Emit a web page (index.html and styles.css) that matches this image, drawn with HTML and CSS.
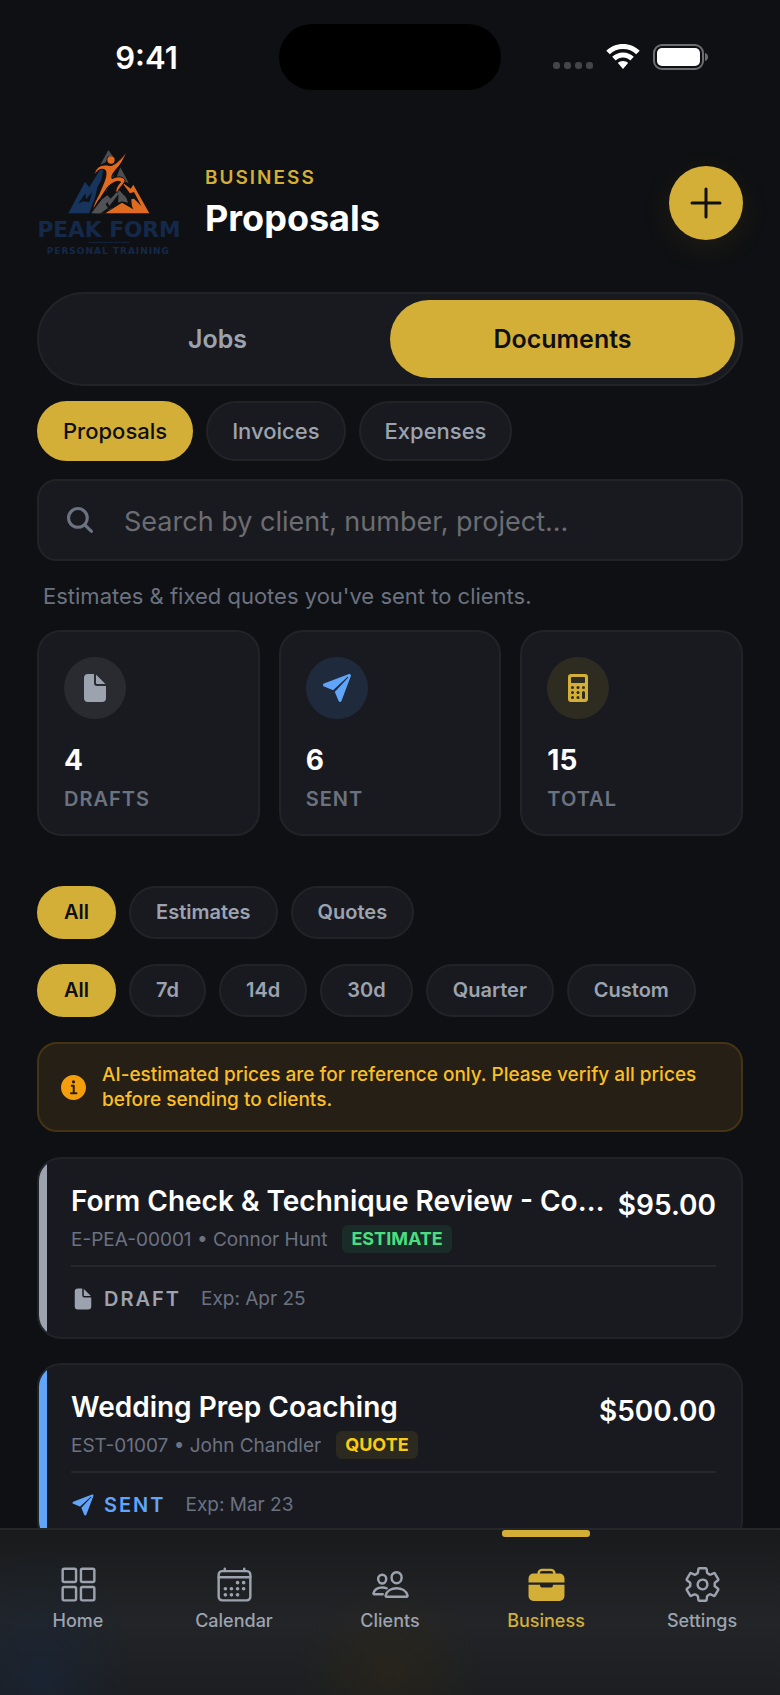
FILE: index.html
```html
<!DOCTYPE html>
<html lang="en">
<head>
  <meta charset="UTF-8">
  <meta name="viewport" content="width=device-width, initial-scale=1.0">
  <title>Proposals</title>
  <link rel="stylesheet" href="styles.css">
</head>
<body>
  <svg class="sprite" aria-hidden="true">
    <symbol id="icon-document" viewBox="0 0 512 512">
      <path d="M428 224H288a48 48 0 01-48-48V36a4 4 0 00-4-4h-92a64 64 0 00-64 64v320a64 64 0 0064 64h224a64 64 0 0064-64V228a4 4 0 00-4-4z"/>
      <path d="M419.22 188.59L275.41 44.78a2 2 0 00-3.41 1.41V176a16 16 0 0016 16h129.81a2 2 0 001.41-3.41z"/>
    </symbol>
    <symbol id="icon-plane" viewBox="0 0 512 512">
      <path d="M473 39.05a24 24 0 00-25.5-5.46L47.47 185h-.08a24 24 0 001 45.16l.41.13 137.3 58.63a16 16 0 0015.54-3.59L422 80a7.07 7.07 0 0110 10L226.66 310.26a16 16 0 00-3.59 15.54l58.65 137.38c.06.2.12.38.19.57 3.2 9.27 11.3 15.81 21.09 16.25h1a24.63 24.63 0 0023-15.46L478.39 64.62A24 24 0 00473 39.05z"/>
    </symbol>
  </svg>

  <div class="status-bar">
    <span class="time">9:41</span>
    <span class="island"></span>
    <span class="status-icons">
      <span class="dots"><i></i><i></i><i></i><i></i></span>
      <svg class="wifi" viewBox="0 0 34 26" aria-hidden="true">
        <path d="M17 0C23.5 0 29.400 2.500 33.700 6.700L30.200 10.300C26.700 6.900 22.100 5 17 5S7.300 6.900 3.800 10.300L.3 6.700C4.600 2.500 10.500 0 17 0z"/>
        <path d="M17 8.500C21.200 8.500 25 10.100 27.800 12.800L24.300 16.400C22.400 14.500 19.800 13.500 17 13.500S11.600 14.500 9.700 16.400L6.200 12.800C9 10.100 12.800 8.500 17 8.500z"/>
        <path d="M17 17C19 17 20.800 17.700 22.100 18.900L17 25L11.900 18.900C13.200 17.700 15 17 17 17z"/>
      </svg>
      <svg class="battery" viewBox="0 0 56 26" aria-hidden="true">
        <rect x="1" y="1" width="49" height="24" rx="8" fill="none" stroke="#6d6e70" stroke-width="2"/>
        <rect x="4" y="4" width="43" height="18" rx="5" fill="#fff"/>
        <path d="M52 9c4 1 4 7 0 8z" fill="#6d6e70"/>
      </svg>
    </span>
  </div>

  <main class="screen">
    <header class="header">
      <svg class="logo" viewBox="51 60 432 318" role="img" aria-label="Peak Form Personal Training">
        <path fill="#4b4d50" d="M265 60L278 78L262 80L258 96L241 104z"/>
        <path fill="#4b4d50" d="M301 112L326 158L314 156L306 142L290 140z"/>
        <path fill="#17345c" d="M145 250L195 155L208 172L238 122L250 118L244 150L232 172L226 200L208 250z"/>
        <path fill="#101114" d="M174 222L196 190L198 208L217 186L208 216L188 214z"/>
        <path fill="#17345c" d="M268 118L290 104L278 128L282 138L270 162L258 188L262 158z"/>
        <path fill="#505255" d="M214 250L246 208L262 196L272 206L296 180L318 198L324 218L304 214L254 250z"/>
        <path fill="#101114" d="M236 250L262 216L268 228L296 192L294 216L334 228L310 222L270 236L258 250z"/>
        <path fill="#505255" d="M224 250L254 218L264 234L242 250z"/>
        <path fill="#e06a1f" d="M310 160L332 176L340 164L388 250L256 250L306 218L340 238L322 198z"/>
        <path fill="#101114" d="M312 166L330 190L342 186L364 228L342 206L334 208L336 236L318 202L304 188z"/>
        <circle cx="273" cy="90" r="11" fill="#e06a1f"/>
        <path fill="#e06a1f" stroke="#101114" stroke-width="3" d="M322 64C312 86 302 106 287 120C278 130 274 138 276 146C296 136 313 141 315 152C314 162 300 168 292 188L287 184C289 170 296 163 302 156C292 150 278 158 264 170C250 190 244 202 234 214L218 242C220 220 231 206 237 192C248 164 262 142 257 122C246 112 232 120 222 136C226 112 242 103 262 105C280 114 302 88 322 64z"/>
        <text class="logo-name" x="267" y="321" text-anchor="middle">PEAK FORM</text>
        <path d="M205 337H330" stroke="#14263f" stroke-width="3"/>
        <text class="logo-tag" x="265" y="371" text-anchor="middle">PERSONAL TRAINING</text>
      </svg>
      <div class="heading">
        <span class="eyebrow">Business</span>
        <h1>Proposals</h1>
      </div>
      <button class="add-btn" type="button" aria-label="Add proposal">
        <svg viewBox="0 0 32 32" aria-hidden="true"><path d="M16 2v28M2 16h28"/></svg>
      </button>
    </header>

    <div class="tabs">
      <button class="tab" type="button">Jobs</button>
      <button class="tab active" type="button">Documents</button>
    </div>

    <div class="chips">
      <button class="chip active" type="button">Proposals</button>
      <button class="chip" type="button">Invoices</button>
      <button class="chip" type="button">Expenses</button>
    </div>

    <label class="search">
      <svg class="search-icon" viewBox="0 0 512 512" aria-hidden="true">
        <path d="M456.69 421.39L362.6 327.3a173.81 173.81 0 0034.84-104.58C397.44 126.38 319.06 48 222.72 48S48 126.38 48 222.72s78.38 174.72 174.72 174.72A173.81 173.81 0 00327.3 362.6l94.09 94.09a25 25 0 0035.3-35.3zM97.92 222.72a124.8 124.8 0 11124.8 124.8 124.95 124.95 0 01-124.8-124.8z"/>
      </svg>
      <input type="text" placeholder="Search by client, number, project..." aria-label="Search">
    </label>

    <p class="caption">Estimates &amp; fixed quotes you've sent to clients.</p>

    <section class="stats">
      <div class="stat">
        <span class="stat-icon gray"><svg><use href="#icon-document"/></svg></span>
        <strong>4</strong>
        <span class="stat-label">Drafts</span>
      </div>
      <div class="stat">
        <span class="stat-icon blue"><svg><use href="#icon-plane"/></svg></span>
        <strong>6</strong>
        <span class="stat-label">Sent</span>
      </div>
      <div class="stat">
        <span class="stat-icon gold">
          <svg viewBox="0 0 512 512">
            <path fill-rule="evenodd" d="M144 32h224a48 48 0 0148 48v352a48 48 0 01-48 48H144a48 48 0 01-48-48V80a48 48 0 0148-48zM156 80a12 12 0 00-12 12v72a12 12 0 0012 12h200a12 12 0 0012-12V92a12 12 0 00-12-12z"/>
            <g class="keys">
              <circle cx="168" cy="248" r="24"/><circle cx="256" cy="248" r="24"/><circle cx="344" cy="248" r="24"/>
              <circle cx="168" cy="328" r="24"/><circle cx="256" cy="328" r="24"/>
              <circle cx="168" cy="408" r="24"/><circle cx="256" cy="408" r="24"/>
              <rect x="320" y="304" width="48" height="128" rx="24"/>
            </g>
          </svg>
        </span>
        <strong>15</strong>
        <span class="stat-label">Total</span>
      </div>
    </section>

    <div class="filters">
      <button class="filter active" type="button">All</button>
      <button class="filter" type="button">Estimates</button>
      <button class="filter" type="button">Quotes</button>
    </div>
    <div class="filters">
      <button class="filter active" type="button">All</button>
      <button class="filter" type="button">7d</button>
      <button class="filter" type="button">14d</button>
      <button class="filter" type="button">30d</button>
      <button class="filter" type="button">Quarter</button>
      <button class="filter" type="button">Custom</button>
    </div>

    <div class="notice">
      <svg viewBox="56 56 400 400" aria-hidden="true">
        <path d="M256 56C145.72 56 56 145.72 56 256s89.72 200 200 200 200-89.72 200-200S366.28 56 256 56zm0 82a26 26 0 11-26 26 26 26 0 0126-26zm48 226h-88a16 16 0 010-32h28v-88h-16a16 16 0 010-32h32a16 16 0 0116 16v104h28a16 16 0 010 32z"/>
      </svg>
      <p>AI-estimated prices are for reference only. Please verify all prices before sending to clients.</p>
    </div>

    <article class="card draft">
      <div class="card-body">
        <div class="card-top">
          <div class="card-info">
            <h2>Form Check &amp; Technique Review - Co…</h2>
            <div class="meta">E-PEA-00001 • Connor Hunt <span class="badge green">Estimate</span></div>
          </div>
          <span class="price">$95.00</span>
        </div>
        <div class="card-foot">
          <span class="state"><svg><use href="#icon-document"/></svg>Draft</span>
          <span class="exp">Exp: Apr 25</span>
        </div>
      </div>
    </article>

    <article class="card sent">
      <div class="card-body">
        <div class="card-top">
          <div class="card-info">
            <h2>Wedding Prep Coaching</h2>
            <div class="meta">EST-01007 • John Chandler <span class="badge yellow">Quote</span></div>
          </div>
          <span class="price">$500.00</span>
        </div>
        <div class="card-foot">
          <span class="state"><svg><use href="#icon-plane"/></svg>Sent</span>
          <span class="exp">Exp: Mar 23</span>
        </div>
      </div>
    </article>
  </main>

  <nav class="tab-bar">
    <a href="#home">
      <svg class="line" viewBox="0 0 512 512" aria-hidden="true">
        <rect x="48" y="48" width="176" height="176" rx="20"/><rect x="288" y="48" width="176" height="176" rx="20"/>
        <rect x="48" y="288" width="176" height="176" rx="20"/><rect x="288" y="288" width="176" height="176" rx="20"/>
      </svg>
      Home
    </a>
    <a href="#calendar">
      <svg class="line" viewBox="0 0 512 512" aria-hidden="true">
        <rect x="48" y="80" width="416" height="384" rx="48"/>
        <path d="M128 48v32M384 48v32M464 160H48"/>
        <g class="solid">
          <circle cx="296" cy="232" r="24"/><circle cx="376" cy="232" r="24"/>
          <circle cx="136" cy="312" r="24"/><circle cx="216" cy="312" r="24"/><circle cx="296" cy="312" r="24"/><circle cx="376" cy="312" r="24"/>
          <circle cx="136" cy="392" r="24"/><circle cx="216" cy="392" r="24"/><circle cx="296" cy="392" r="24"/>
        </g>
      </svg>
      Calendar
    </a>
    <a href="#clients">
      <svg class="line" viewBox="0 0 512 512" aria-hidden="true">
        <path d="M402 168c-2.930 40.670-33.100 72-66 72s-63.120-31.320-66-72c-3-42.310 26.370-72 66-72s69 30.460 66 72z"/>
        <path d="M336 304c-65.170 0-127.840 32.370-143.540 95.410-2.080 8.340 3.150 16.590 11.720 16.590h263.650c8.570 0 13.770-8.250 11.720-16.590C463.850 335.360 401.180 304 336 304z"/>
        <path d="M200 185.940c-2.340 32.480-26.720 58.060-53 58.060s-50.700-25.570-53-58.060C91.610 152.150 115.340 128 147 128s55.390 24.770 53 57.940z"/>
        <path d="M206 306c-18.050-8.270-37.930-11.450-59-11.450-52 0-102.100 25.850-114.650 76.200-1.650 6.660 2.530 13.250 9.370 13.250H154"/>
      </svg>
      Clients
    </a>
    <a class="active" href="#business">
      <svg viewBox="0 0 512 512" aria-hidden="true">
        <path d="M152 120v-8a48 48 0 0148-48h112a48 48 0 0148 48v8" fill="none" stroke="currentColor" stroke-width="32"/>
        <path d="M84 112h344a64 64 0 0164 64v54H20v-54a64 64 0 0164-64z"/>
        <path d="M20 260h152v14a22 22 0 0022 22h124a22 22 0 0022-22v-14h152v148a64 64 0 01-64 64H84a64 64 0 01-64-64z"/>
      </svg>
      Business
    </a>
    <a href="#settings">
      <svg class="line" viewBox="0 0 512 512" aria-hidden="true">
        <path d="M262.290 192.310a64 64 0 1057.400 57.400 64.130 64.130 0 00-57.400-57.400zM416.390 256a154.340 154.340 0 01-1.530 20.790l45.210 35.460a10.810 10.810 0 012.450 13.750l-42.770 74a10.810 10.810 0 01-13.140 4.590l-44.900-18.080a16.110 16.110 0 00-15.170 1.750A164.480 164.480 0 01325 400.800a15.940 15.940 0 00-8.820 12.140l-6.730 47.890a11.080 11.080 0 01-10.680 9.170h-85.540a11.110 11.110 0 01-10.690-8.870l-6.720-47.820a16.070 16.070 0 00-9-12.220 155.300 155.300 0 01-21.460-12.570 16 16 0 00-15.110-1.710l-44.890 18.070a10.810 10.810 0 01-13.140-4.580l-42.770-74a10.800 10.800 0 012.450-13.750l38.210-30a16.050 16.050 0 006-14.080c-.36-4.170-.58-8.330-.58-12.500s.21-8.270.58-12.350a16 16 0 00-6.070-13.940l-38.190-30A10.810 10.810 0 0149.480 186l42.770-74a10.810 10.810 0 0113.140-4.590l44.900 18.080a16.110 16.110 0 0015.170-1.750A164.480 164.480 0 01187 111.200a15.940 15.940 0 008.820-12.140l6.730-47.890A11.080 11.080 0 01213.230 42h85.540a11.110 11.110 0 0110.690 8.870l6.720 47.820a16.070 16.070 0 009 12.220 155.300 155.300 0 0121.460 12.570 16 16 0 0015.110 1.710l44.890-18.070a10.810 10.810 0 0113.140 4.580l42.770 74a10.800 10.800 0 01-2.450 13.750l-38.210 30a16.050 16.050 0 00-6.050 14.080c.33 4.140.55 8.300.55 12.470z"/>
      </svg>
      Settings
    </a>
  </nav>
</body>
</html>
```
FILE: styles.css
```css
* {
  box-sizing: border-box;
}
body {
  margin: 0;
  min-height: 100vh;
  background: #0f1013;
  color: #fff;
  font-family: Inter, "Liberation Sans", sans-serif;
}
h1, h2, p {
  margin: 0;
}
button {
  font-family: inherit;
  cursor: pointer;
}
svg {
  display: block;
  fill: currentColor;
}
.sprite {
  position: absolute;
  width: 0;
  height: 0;
}

/* status bar */
.status-bar {
  display: grid;
  grid-template-columns: 1fr 222px 1fr;
  align-items: center;
  padding: 24px 0 60px;
}
.time {
  padding-left: 14px;
  text-align: center;
  font-size: 31px;
  font-weight: 600;
}
.island {
  height: 66px;
  border-radius: 33px;
  background: #000;
}
.status-icons {
  display: flex;
  align-items: center;
  justify-content: flex-end;
  gap: 13px;
  padding-right: 71px;
}
.dots {
  display: flex;
  gap: 4px;
  padding-top: 16px;
}
.dots i {
  width: 7px;
  height: 7px;
  border-radius: 3px;
  background: #444548;
}
.wifi {
  width: 34px;
  height: 26px;
}
.battery {
  width: 56px;
  height: 26px;
}

.screen {
  padding: 0 37px 100px;
}

/* header */
.header {
  display: flex;
  align-items: center;
  margin-bottom: 36px;
}
.logo {
  width: 144px;
  height: 106px;
  margin-right: 24px;
}
.logo-name, .logo-tag {
  fill: #14294a;
  font-family: "DejaVu Sans", sans-serif;
  font-weight: 700;
}
.logo-name {
  font-size: 65px;
}
.logo-tag {
  font-size: 27px;
  letter-spacing: 3px;
}
.heading {
  flex: 1;
}
.eyebrow {
  display: block;
  color: #d4af37;
  font-size: 19px;
  line-height: 24px;
  font-weight: 600;
  letter-spacing: 2px;
  text-transform: uppercase;
}
h1 {
  margin-top: 6px;
  font-size: 36px;
  line-height: 44px;
  font-weight: 700;
}
.add-btn {
  display: flex;
  align-items: center;
  justify-content: center;
  width: 74px;
  height: 74px;
  padding: 0;
  border: none;
  border-radius: 50%;
  background: #d4af37;
  color: #0f1013;
  box-shadow: 0 8px 32px rgba(212, 175, 55, 0.08);
}
.add-btn svg {
  width: 32px;
  height: 32px;
  stroke: currentColor;
  stroke-width: 3;
  stroke-linecap: round;
}

/* tabs and chips */
.tabs {
  display: grid;
  grid-template-columns: 1fr 1fr;
  padding: 6px;
  border: 2px solid #212327;
  border-radius: 47px;
  background: #191a20;
}
.tab {
  padding: 24px 0;
  border: none;
  border-radius: 39px;
  background: none;
  color: #9ca3af;
  font-size: 25px;
  line-height: 30px;
  font-weight: 600;
}
.chips {
  display: flex;
  gap: 13px;
  margin: 15px 0 18px;
}
.chip, .filter {
  border: 2px solid #212327;
  background: #191a20;
  color: #9ca3af;
}
.chip {
  padding: 14px 24px;
  border-radius: 30px;
  font-size: 22px;
  line-height: 28px;
  font-weight: 500;
}
.tab.active, .chip.active, .filter.active {
  border-color: #d4af37;
  background: #d4af37;
  color: #0f1013;
}

.search {
  display: flex;
  align-items: center;
  gap: 28px;
  padding: 20px 25px;
  border: 2px solid #212327;
  border-radius: 20px;
  background: #191a20;
}
.search-icon {
  width: 32px;
  height: 32px;
  color: #6b7280;
}
.search input {
  flex: 1;
  min-width: 0;
  padding: 4px 0 0;
  border: none;
  outline: none;
  background: none;
  color: #fff;
  font-family: inherit;
  font-size: 27px;
  line-height: 34px;
}
.search input::placeholder {
  color: #6c6d72;
}
.caption {
  margin: 22px 6px 21px;
  color: #6b7280;
  font-size: 22px;
  line-height: 26px;
}

/* stats */
.stats {
  display: grid;
  grid-template-columns: repeat(3, 1fr);
  gap: 19px;
  margin-bottom: 50px;
}
.stat {
  display: flex;
  flex-direction: column;
  padding: 25px 25px 23px;
  border: 2px solid #212327;
  border-radius: 24px;
  background: #191a20;
}
.stat-icon {
  display: flex;
  align-items: center;
  justify-content: center;
  width: 62px;
  height: 62px;
  border-radius: 50%;
}
.stat-icon svg {
  width: 32px;
  height: 32px;
}
.gray {
  background: #292b30;
  color: #9ca3af;
}
.blue {
  background: #1f2b3c;
  color: #60a5fa;
}
.gold {
  background: #2e2b20;
  color: #d4af37;
}
.keys {
  fill: #2e2b20;
}
.stat strong {
  margin-top: 24px;
  font-size: 28px;
  line-height: 34px;
}
.stat-label {
  margin-top: 10px;
  color: #6b7280;
  font-size: 20px;
  line-height: 24px;
  font-weight: 600;
  letter-spacing: 1px;
  text-transform: uppercase;
}

.filters {
  display: flex;
  gap: 13px;
  margin-bottom: 25px;
}
.filter {
  padding: 12px 25px;
  border-radius: 27px;
  font-size: 20px;
  line-height: 25px;
  font-weight: 600;
}

.notice {
  display: flex;
  align-items: center;
  gap: 16px;
  margin-bottom: 25px;
  padding: 18px 22px;
  border: 2px solid #443414;
  border-radius: 20px;
  background: #261f15;
  color: #fbbf24;
}
.notice svg {
  flex: none;
  width: 25px;
  height: 25px;
  color: #f59e0b;
}
.notice p {
  font-size: 19px;
  line-height: 25px;
  font-weight: 500;
}

/* proposal cards */
.card {
  display: flex;
  margin-bottom: 24px;
  overflow: hidden;
  border: 2px solid #212327;
  border-radius: 24px;
  background: #191a20;
}
.card::before {
  content: "";
  width: 8px;
  background: #9ca3af;
}
.card.sent::before {
  background: #60a5fa;
}
.card-body {
  flex: 1;
  min-width: 0;
  padding: 25px 25px 26px 24px;
}
.card-top {
  display: flex;
  gap: 12px;
  padding-bottom: 12px;
  border-bottom: 2px solid #25272b;
}
.card-info {
  flex: 1;
  min-width: 0;
}
h2 {
  overflow: hidden;
  font-size: 28px;
  line-height: 34px;
  font-weight: 600;
  white-space: nowrap;
  text-overflow: ellipsis;
}
.price {
  font-size: 28px;
  line-height: 42px;
  font-weight: 600;
}
.meta {
  display: flex;
  align-items: center;
  gap: 15px;
  margin-top: 7px;
  color: #6b7280;
  font-size: 19px;
}
.badge {
  padding: 0 9px;
  border-radius: 6px;
  font-size: 18px;
  line-height: 28px;
  font-weight: 700;
  text-transform: uppercase;
}
.green {
  background: #1a2c28;
  color: #4ade80;
}
.yellow {
  background: #2c2a20;
  color: #facc15;
}
.card-foot {
  display: flex;
  align-items: center;
  gap: 20px;
  padding-top: 20px;
  font-size: 19px;
  line-height: 24px;
}
.state {
  display: flex;
  align-items: center;
  gap: 9px;
  color: #9ca3af;
  font-size: 20px;
  font-weight: 600;
  letter-spacing: 2px;
  text-transform: uppercase;
}
.state svg {
  width: 24px;
  height: 24px;
}
.sent .state {
  color: #60a5fa;
}
.exp {
  color: #6b7280;
}

/* bottom tab bar */
.tab-bar {
  position: fixed;
  right: 0;
  bottom: 0;
  left: 0;
  display: grid;
  grid-template-columns: repeat(5, 1fr);
  padding-bottom: 62px;
  border-top: 2px solid #25272a;
  background:
    radial-gradient(90px 130px at 40px 150px, rgba(24, 38, 60, 0.6), transparent),
    radial-gradient(90px 90px at 390px 140px, rgba(48, 40, 20, 0.5), transparent),
    linear-gradient(#181a1c, #222427 55%, #1c1e21);
}
.tab-bar a {
  position: relative;
  display: flex;
  flex-direction: column;
  align-items: center;
  gap: 5px;
  padding-top: 35px;
  color: #9ca3af;
  font-size: 18px;
  line-height: 24px;
  font-weight: 500;
  text-decoration: none;
}
.tab-bar svg {
  width: 39px;
  height: 39px;
}
.line {
  fill: none;
  stroke: currentColor;
  stroke-width: 32;
  stroke-linecap: round;
  stroke-linejoin: round;
}
.solid {
  fill: currentColor;
  stroke: none;
}
.tab-bar .active {
  color: #d4af37;
}
.tab-bar .active::before {
  content: "";
  position: absolute;
  top: 0;
  width: 88px;
  height: 7px;
  border-radius: 3px;
  background: #d4af37;
}
```
